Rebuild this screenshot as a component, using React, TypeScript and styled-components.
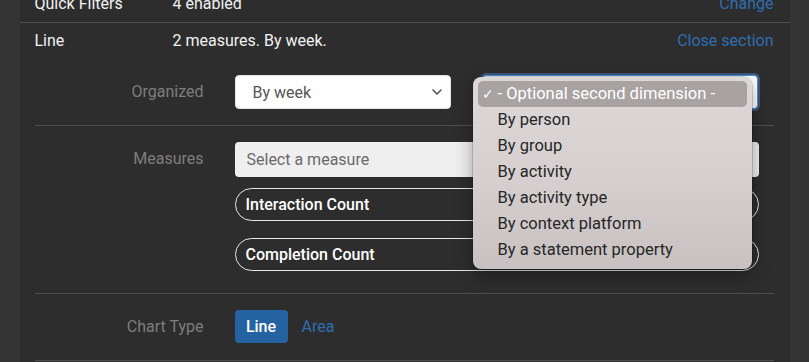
import styled, { createGlobalStyle } from 'styled-components';

const GlobalStyle = createGlobalStyle`
  html, body {
    margin: 0;
    padding: 0;
    background: #343434;
    font-family: Roboto, 'Liberation Sans', sans-serif;
    font-size: 16px;
    overflow: hidden;
  }
`;

const dimensionOptions = [
  'By person',
  'By group',
  'By activity',
  'By activity type',
  'By context platform',
  'By a statement property',
];

function Chevron() {
  return (
    <svg width="10" height="6" viewBox="0 0 10 6">
      <path
        d="M1 1l4 4 4-4"
        fill="none"
        stroke="#555"
        strokeWidth="1.6"
        strokeLinecap="round"
        strokeLinejoin="round"
      />
    </svg>
  );
}

export default function App() {
  return (
    <>
      <GlobalStyle />
      <Page>
        <Gutter />
        <Panel>
          <SummaryRow>
            <SummaryLabel>Quick Filters</SummaryLabel>
            <SummaryValue>4 enabled</SummaryValue>
            <SummaryLink>Change</SummaryLink>
          </SummaryRow>
          <SummaryRow $open>
            <SummaryLabel>Line</SummaryLabel>
            <SummaryValue>2 measures. By week.</SummaryValue>
            <SummaryLink>Close section</SummaryLink>
          </SummaryRow>
          <SectionBody>
            <FieldRow>
              <FieldLabel>Organized</FieldLabel>
              <FieldControls>
                <SelectBox $width={216}>
                  <span>By week</span>
                  <Chevron />
                </SelectBox>
                <SelectAnchor>
                  <SelectBox $width={276} $focused>
                    <span>- Optional second dimension -</span>
                    <Chevron />
                  </SelectBox>
                  <DropdownMenu>
                    <DropdownItem $active>
                      <Check>✓</Check>- Optional second dimension -
                    </DropdownItem>
                    {dimensionOptions.map((option) => (
                      <DropdownItem key={option}>{option}</DropdownItem>
                    ))}
                  </DropdownMenu>
                </SelectAnchor>
              </FieldControls>
            </FieldRow>
            <FieldRow $bottom={22}>
              <FieldLabel>Measures</FieldLabel>
              <MeasureList>
                <MeasureInput>Select a measure</MeasureInput>
                <MeasurePill>Interaction Count</MeasurePill>
                <MeasurePill>Completion Count</MeasurePill>
              </MeasureList>
            </FieldRow>
            <FieldRow>
              <FieldLabel>Chart Type</FieldLabel>
              <FieldControls $gap={14}>
                <ChartButton>Line</ChartButton>
                <ChartLink>Area</ChartLink>
              </FieldControls>
            </FieldRow>
          </SectionBody>
        </Panel>
        <Gutter />
      </Page>
    </>
  );
}

const Page = styled.div`
  display: flex;
  height: 362px;
  overflow: hidden;
`;

const Gutter = styled.div`
  flex: 1;
  background: #343434;
`;

const Panel = styled.div`
  width: 770px;
  flex-shrink: 0;
  background: #2d2d2d;
  margin-top: -14px;
`;

const SummaryRow = styled.div<{ $open?: boolean }>`
  display: grid;
  grid-template-columns: 138px 1fr auto;
  align-items: center;
  padding: 8px 16px 8px 15px;
  line-height: 20px;
  border-bottom: ${({ $open }) => ($open ? 'none' : '1px solid #4f4f4f')};
`;

const SummaryLabel = styled.div`
  color: #f2f2f2;
`;

const SummaryValue = styled.div`
  color: #f2f2f2;
`;

const SummaryLink = styled.a`
  color: #2f6db0;
  cursor: pointer;
`;

const SectionBody = styled.div`
  padding: 0 16px 0 15px;
`;

const FieldRow = styled.div<{ $bottom?: number }>`
  display: grid;
  grid-template-columns: 169px 524px;
  column-gap: 31px;
  align-items: start;
  padding: 16px 0 ${({ $bottom }) => $bottom ?? 16}px;
  border-bottom: 1px solid #4f4f4f;
`;

const FieldLabel = styled.div`
  text-align: right;
  color: #7d7d7d;
  line-height: 34px;
`;

const FieldControls = styled.div<{ $gap?: number }>`
  display: flex;
  align-items: center;
  gap: ${({ $gap }) => $gap ?? 31}px;
`;

const SelectAnchor = styled.div`
  position: relative;
`;

const SelectBox = styled.div<{ $width: number; $focused?: boolean }>`
  box-sizing: border-box;
  width: ${({ $width }) => $width}px;
  height: 34px;
  display: flex;
  align-items: center;
  justify-content: space-between;
  padding: 0 8px 0 17px;
  background: #fff;
  color: #555;
  border-radius: 4px;
  border: 1px solid ${({ $focused }) => ($focused ? '#4f8fd6' : '#e3e3e3')};
  box-shadow: ${({ $focused }) =>
    $focused ? '0 0 0 2px rgba(79, 143, 214, 0.45)' : 'none'};
`;

const DropdownMenu = styled.div`
  position: absolute;
  left: -9px;
  top: 2px;
  width: 279px;
  box-sizing: border-box;
  padding: 4px 5px 6px;
  border-radius: 8px;
  background: linear-gradient(180deg, #ddd8d8 0%, #d6d0d0 50%, #c7c1c1 100%);
  box-shadow: 0 6px 18px rgba(0, 0, 0, 0.35), 0 0 0 0.5px rgba(0, 0, 0, 0.3);
  z-index: 2;
`;

const DropdownItem = styled.div<{ $active?: boolean }>`
  height: 26px;
  line-height: 26px;
  padding-left: ${({ $active }) => ($active ? '4px' : '20px')};
  border-radius: 5px;
  font-size: 16.5px;
  color: ${({ $active }) => ($active ? '#fff' : '#262626')};
  background: ${({ $active }) => ($active ? '#a8a3a2' : 'transparent')};
  white-space: nowrap;
`;

const Check = styled.span`
  display: inline-block;
  width: 16px;
  font-size: 14px;
`;

const MeasureList = styled.div`
  display: flex;
  flex-direction: column;
`;

const MeasureInput = styled.div`
  height: 35px;
  line-height: 35px;
  padding: 0 12px;
  background: #efefef;
  color: #6a6a6a;
  border-radius: 4px;
  margin-bottom: 11px;
`;

const MeasurePill = styled.div`
  box-sizing: border-box;
  height: 33px;
  line-height: 31px;
  padding: 0 10px;
  border: 1px solid #e8e8e8;
  border-radius: 17px;
  color: #fff;
  font-weight: 500;
  & + & {
    margin-top: 17px;
  }
`;

const ChartButton = styled.button`
  width: 53px;
  height: 33px;
  border: none;
  border-radius: 4px;
  background: #2462a2;
  color: #fff;
  font-family: inherit;
  font-size: 16px;
  font-weight: 500;
  padding: 0;
`;

const ChartLink = styled.a`
  color: #2f6db0;
  cursor: pointer;
`;
